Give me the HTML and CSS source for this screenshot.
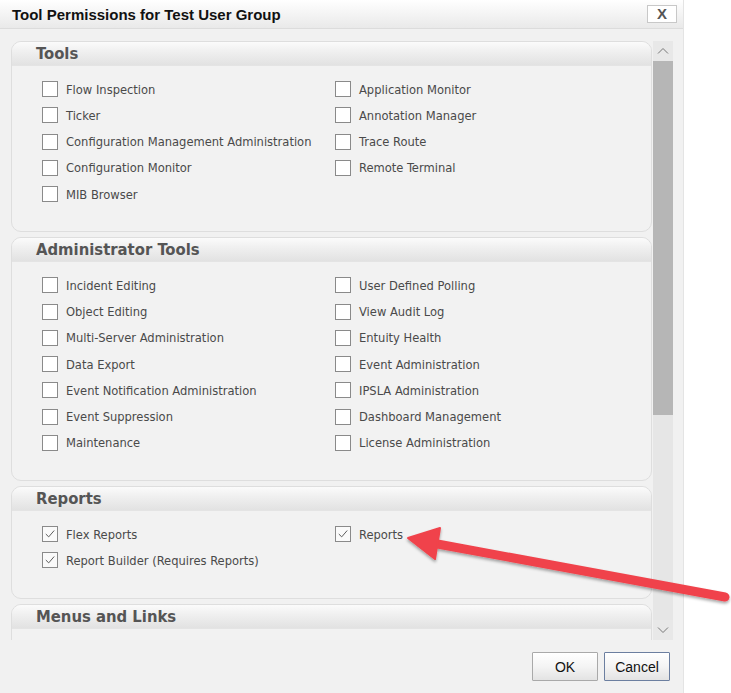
FILE: index.html
```html
<!DOCTYPE html>
<html>
<head>
<meta charset="utf-8">
<link rel="stylesheet" href="styles.css">
</head>
<body>
<div class="dialog">
  <div class="titlebar">
    <span class="title">Tool Permissions for Test User Group</span>
    <span class="close">X</span>
  </div>
  <div class="main">
    <div class="scroller">
      <div class="content">
        <section class="panel">
          <h2 class="phead">Tools</h2>
          <div class="grid">
            <label class="item"><span class="cb"></span>Flow Inspection</label>
            <label class="item"><span class="cb"></span>Application Monitor</label>
            <label class="item"><span class="cb"></span>Ticker</label>
            <label class="item"><span class="cb"></span>Annotation Manager</label>
            <label class="item"><span class="cb"></span>Configuration Management Administration</label>
            <label class="item"><span class="cb"></span>Trace Route</label>
            <label class="item"><span class="cb"></span>Configuration Monitor</label>
            <label class="item"><span class="cb"></span>Remote Terminal</label>
            <label class="item"><span class="cb"></span>MIB Browser</label>
          </div>
        </section>
        <section class="panel">
          <h2 class="phead">Administrator Tools</h2>
          <div class="grid">
            <label class="item"><span class="cb"></span>Incident Editing</label>
            <label class="item"><span class="cb"></span>User Defined Polling</label>
            <label class="item"><span class="cb"></span>Object Editing</label>
            <label class="item"><span class="cb"></span>View Audit Log</label>
            <label class="item"><span class="cb"></span>Multi-Server Administration</label>
            <label class="item"><span class="cb"></span>Entuity Health</label>
            <label class="item"><span class="cb"></span>Data Export</label>
            <label class="item"><span class="cb"></span>Event Administration</label>
            <label class="item"><span class="cb"></span>Event Notification Administration</label>
            <label class="item"><span class="cb"></span>IPSLA Administration</label>
            <label class="item"><span class="cb"></span>Event Suppression</label>
            <label class="item"><span class="cb"></span>Dashboard Management</label>
            <label class="item"><span class="cb"></span>Maintenance</label>
            <label class="item"><span class="cb"></span>License Administration</label>
          </div>
        </section>
        <section class="panel reports">
          <h2 class="phead">Reports</h2>
          <div class="grid">
            <label class="item"><span class="cb checked"><svg viewBox="0 0 16 16" width="16" height="16"><path d="M3.2 8 L6.5 11.3 L12.8 4" fill="none" stroke="#555" stroke-width="1.1"/></svg></span>Flex Reports</label>
            <label class="item"><span class="cb checked"><svg viewBox="0 0 16 16" width="16" height="16"><path d="M3.2 8 L6.5 11.3 L12.8 4" fill="none" stroke="#555" stroke-width="1.1"/></svg></span>Reports</label>
            <label class="item"><span class="cb checked"><svg viewBox="0 0 16 16" width="16" height="16"><path d="M3.2 8 L6.5 11.3 L12.8 4" fill="none" stroke="#555" stroke-width="1.1"/></svg></span>Report Builder (Requires Reports)</label>
          </div>
        </section>
        <section class="panel">
          <h2 class="phead">Menus and Links</h2>
          <div class="grid"></div>
        </section>
      </div>
      <div class="scrollbar">
        <div class="sbtn"><svg width="12" height="8" viewBox="0 0 12 8"><path d="M1 6.5 L6 1.5 L11 6.5" fill="none" stroke="#777" stroke-width="1"/></svg></div>
        <div class="thumb"></div>
        <div class="track"></div>
        <div class="sbtn"><svg width="12" height="8" viewBox="0 0 12 8"><path d="M1 1.5 L6 6.5 L11 1.5" fill="none" stroke="#777" stroke-width="1"/></svg></div>
      </div>
    </div>
    <div class="footer">
      <button class="btn">OK</button>
      <button class="btn default">Cancel</button>
    </div>
  </div>
</div>
<svg class="arrow" width="731" height="693" viewBox="0 0 731 693">
  <defs>
    <filter id="sh" x="-10%" y="-10%" width="120%" height="130%">
      <feDropShadow dx="0" dy="2" stdDeviation="1.5" flood-color="#000" flood-opacity="0.35"/>
    </filter>
  </defs>
  <g filter="url(#sh)" fill="#f0434b" stroke="#f0434b">
    <line x1="432" y1="543" x2="725" y2="597" stroke-width="9" stroke-linecap="round"/>
    <polygon points="408,538 440,528 435,559" stroke-width="2" stroke-linejoin="round"/>
  </g>
</svg>
</body>
</html>
```
FILE: styles.css
```css
html, body {
  margin: 0;
  padding: 0;
  background: #ffffff;
}
body {
  width: 731px;
  height: 693px;
  overflow: hidden;
  position: relative;
  font-family: "DejaVu Sans Condensed", "DejaVu Sans", sans-serif;
}
.dialog {
  width: 683px;
  height: 693px;
  background: #f1f1f1;
  border-right: 1px solid #e4e4e4;
  display: flex;
  flex-direction: column;
}
.titlebar {
  height: 28px;
  flex: none;
  display: flex;
  align-items: center;
  justify-content: space-between;
  padding: 0 6px 0 12px;
  background: linear-gradient(#ffffff, #e9e9e9);
  border-bottom: 1px solid #dcdcdc;
}
.title {
  font-family: "Liberation Sans", Arial, sans-serif;
  font-weight: bold;
  font-size: 15px;
  color: #111;
}
.close {
  width: 30px;
  height: 18px;
  box-sizing: border-box;
  border: 1px solid #c8c8c8;
  background: #ffffff;
  color: #555;
  font-family: "Liberation Sans", Arial, sans-serif;
  font-weight: bold;
  font-size: 15px;
  line-height: 16px;
  text-align: center;
}
.main {
  flex: 1;
  display: flex;
  flex-direction: column;
  padding: 12px 10px 0 10px;
}
.scroller {
  height: 599px;
  display: flex;
  overflow: hidden;
}
.content {
  width: 643px;
  padding-left: 1px;
  box-sizing: border-box;
  overflow: hidden;
  display: flex;
  flex-direction: column;
  gap: 5px;
}
.panel {
  flex: none;
  width: 641px;
  box-sizing: border-box;
  border: 1px solid #dedede;
  border-radius: 10px;
  background: #f2f2f2;
  padding-bottom: 24px;
}
.phead {
  margin: 0;
  height: 23px;
  line-height: 23px;
  padding-left: 24px;
  border-radius: 9px 9px 0 0;
  background: linear-gradient(#fbfbfb, #f0f0f0 40%, #e2e2e2);
  border-bottom: 1px solid #e4e4e4;
  font-family: "DejaVu Sans Condensed", "DejaVu Sans", sans-serif;
  font-weight: bold;
  font-size: 16.5px;
  color: #555;
}
.grid {
  display: grid;
  grid-template-columns: 293px 1fr;
  grid-auto-rows: 26.25px;
  padding: 10px 0 0 30px;
}
.item {
  display: flex;
  align-items: center;
  gap: 8px;
  font-size: 12.8px;
  color: #4a4a4a;
  white-space: nowrap;
}
.cb {
  width: 16px;
  height: 16px;
  box-sizing: border-box;
  border: 1px solid #8a8a8a;
  background: #ffffff;
  display: flex;
  align-items: center;
  justify-content: center;
  flex: none;
}
.cb.checked {
  background: #fafafa;
}
.scrollbar {
  width: 20px;
  display: flex;
  flex-direction: column;
  background: #e6e6e6;
  flex: none;
}
.sbtn {
  height: 20px;
  display: flex;
  align-items: center;
  justify-content: center;
  background: #e8e8e8;
  flex: none;
}
.thumb {
  height: 354px;
  background: #b6b6b6;
  flex: none;
}
.track {
  flex: 1;
}
.footer {
  display: flex;
  justify-content: flex-end;
  gap: 6px;
  padding: 12px 3px 0 0;
}
.btn {
  width: 66px;
  height: 29px;
  margin: 0;
  padding: 0;
  border: 1px solid #a9a9a9;
  border-radius: 1px;
  background: linear-gradient(#ffffff, #f4f4f4 50%, #e3e3e3);
  font-family: "Liberation Sans", Arial, sans-serif;
  font-size: 14px;
  color: #111;
}
.btn.default {
  border-color: #6c7fa0;
}
.arrow {
  position: absolute;
  left: 0;
  top: 0;
  pointer-events: none;
}
```
